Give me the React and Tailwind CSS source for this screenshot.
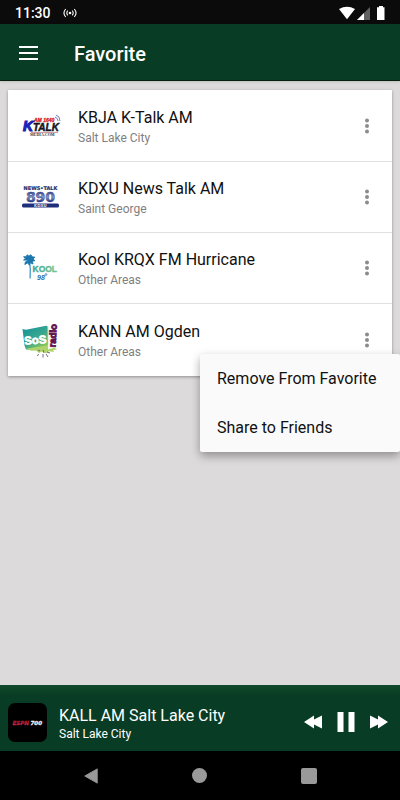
import React, { useState } from 'react';

function KTalkLogo() {
  return (
    <svg viewBox="0 0 42 42" className="w-[42px] h-[42px] shrink-0" aria-hidden="true">
      <g fontFamily="Liberation Sans, sans-serif" fontWeight="bold">
        <text x="14" y="16.5" fontSize="5" fontStyle="italic" fill="#d3202c" stroke="#d3202c" strokeWidth="0.3">AM 1640</text>
        <path d="M35 12q3 1 3 4M36 10q4 1 4 6" fill="none" stroke="#5359a8" strokeWidth="0.8" />
        <text x="13" y="26" fontSize="10" fontStyle="italic" fill="#15151c" stroke="#15151c" strokeWidth="0.5">TALK</text>
        <text x="3" y="26" fontSize="14" fontStyle="italic" fill="#1d22b8" stroke="#1d22b8" strokeWidth="1.1">K</text>
        <path d="M11 27.4h27" stroke="#b86065" strokeWidth="0.7" />
        <text x="10" y="31" fontSize="4" fontFamily="Liberation Serif, serif" fill="#333">MEDIA.COM</text>
      </g>
    </svg>
  );
}

function KdxuLogo() {
  return (
    <svg viewBox="0 0 42 42" className="w-[42px] h-[42px] shrink-0" aria-hidden="true">
      <defs>
        <linearGradient id="kdxu" x1="0" y1="0" x2="0" y2="1">
          <stop offset="0.2" stopColor="#3c4b91" />
          <stop offset="0.5" stopColor="#8d98c4" />
          <stop offset="0.8" stopColor="#25347d" />
        </linearGradient>
      </defs>
      <g fontFamily="DejaVu Sans, sans-serif" fontWeight="bold" textAnchor="middle">
        <text x="20.5" y="14" fontSize="5" fill="#26336f" stroke="#26336f" strokeWidth="0.2">NEWS•TALK</text>
        <text x="20.5" y="26" fontSize="14" fill="url(#kdxu)" stroke="#3c4b91" strokeWidth="0.5">890</text>
        <rect x="2" y="27.5" width="37" height="4" rx="1.5" fill="#1f2f79" />
        <text x="20.5" y="31" fontSize="4" fill="#dfe3f5">KDXU</text>
      </g>
    </svg>
  );
}

function KoolLogo() {
  return (
    <svg viewBox="0 0 42 42" className="w-[42px] h-[42px] shrink-0" aria-hidden="true">
      <path d="M9.5 14q1.4 8 .6 17.5" fill="none" stroke="#4d9fcf" strokeWidth="1.4" />
      <path d="M9 13l-5.4 0 2-1.8-2-1.4 3 0 .4-2 2 1.4 2-1.4.8 2 3 .4-1.8 1.6 1.8 2-2.6.2.8 3-2.8-1.4-.8 2.6-1.6-2.4-3 1.6.8-2.6z" fill="#1c77ae" stroke="#1c77ae" strokeWidth="1" />
      <g fontFamily="Liberation Sans, sans-serif" fontWeight="bold">
        <defs>
          <linearGradient id="kool">
            <stop offset="0" stopColor="#35a79c" />
            <stop offset="1" stopColor="#7cc48a" />
          </linearGradient>
        </defs>
        <text x="12.5" y="25" fontSize="8.5" fill="url(#kool)" stroke="url(#kool)" strokeWidth="0.4">KOOL</text>
        <text x="17" y="33" fontSize="7" fontStyle="italic" fill="#2a6ba8">98</text>
        <circle cx="26" cy="27.5" r="0.9" fill="none" stroke="#2a6ba8" strokeWidth="0.7" />
      </g>
    </svg>
  );
}

function SosLogo() {
  return (
    <svg viewBox="0 0 42 42" className="w-[42px] h-[42px] shrink-0" aria-hidden="true">
      <defs>
        <linearGradient id="sos" x1="0" y1="0" x2="0.8" y2="1">
          <stop offset="0" stopColor="#14909c" />
          <stop offset="0.55" stopColor="#39a88d" />
          <stop offset="1" stopColor="#a2cf4b" />
        </linearGradient>
      </defs>
      <path d="M2.5 10l3.5.8 20-4 3 1 2 21-13 2.4-12-.8-1.5-4z" fill="url(#sos)" />
      <path d="M7 29.5l10-1.5 14-2 6 4.5-4 .5 1 2-5-.8-3 2-4-1.6-3 1.4-3-2.4-5 .2z" fill="#add36a" />
      <path d="M18 31l2 1m3-1l1 3m2 1l2 3m-5-3v3.5m-4-3l-2 1m10-3.5l3 1" stroke="#655879" strokeWidth="0.9" />
      <g fontFamily="Liberation Sans, sans-serif" fontWeight="bold">
        <text x="4" y="25" fontSize="11.5" fill="#fff" stroke="#fff" strokeWidth="0.7" transform="rotate(-4 15 20)">SoS</text>
        <path d="M27.5 6l9.5-1.5-1.5 24-7.5 2z" fill="#fff" fillOpacity="0.85" />
        <text x="0" y="0" fontSize="9.5" fill="#65164f" stroke="#65164f" strokeWidth="0.9" transform="translate(35.5 28.5) rotate(-87)">radio</text>
      </g>
    </svg>
  );
}

const stations = [
  { id: 1, name: 'KBJA K-Talk AM', area: 'Salt Lake City', Logo: KTalkLogo },
  { id: 2, name: 'KDXU News Talk AM', area: 'Saint George', Logo: KdxuLogo },
  { id: 3, name: 'Kool KRQX FM Hurricane', area: 'Other Areas', Logo: KoolLogo },
  { id: 4, name: 'KANN AM Ogden', area: 'Other Areas', Logo: SosLogo },
];

function StatusBar() {
  return (
    <div className="h-6 px-[15px] pt-px flex items-center justify-between bg-[#0b0b0b] text-white">
      <div className="flex items-center gap-3">
        <span className="text-sm font-medium">11:30</span>
        <svg viewBox="0 0 14 10" className="w-3.5 h-2.5" fill="none" stroke="currentColor" strokeWidth="1.1">
          <circle cx="7" cy="5" r="1.3" fill="currentColor" stroke="none" />
          <path d="M4.8 2.7a3.2 3.2 0 0 0 0 4.6M9.2 2.7a3.2 3.2 0 0 1 0 4.6M2.7 1Q-.8 5 2.7 9M11.3 1q3.5 4 0 8" />
        </svg>
      </div>
      <svg viewBox="0 0 46 14" className="w-[46px] h-3.5" fill="currentColor">
        <path d="M0 3Q8 -1.5 16 3L8 13.2z" />
        <path d="M31 1v13H18z" fillOpacity="0.35" />
        <path d="M25 7v7h-7z" />
        <path d="M40 0h4v1.2h1.5V14h-7.5V1.2h2z" />
      </svg>
    </div>
  );
}

export default function App() {
  const [openMenu, setOpenMenu] = useState(4);
  const [favorites, setFavorites] = useState(stations);
  const [playing, setPlaying] = useState(true);

  const handleRemove = (id) => {
    setFavorites(favorites.filter((station) => station.id !== id));
    setOpenMenu(null);
  };

  return (
    <div className="min-h-screen flex flex-col bg-[#dddadc] font-[Roboto,sans-serif]">
      <StatusBar />

      <header className="h-[57px] px-[19px] pt-[3px] flex items-center gap-9 bg-[#093c24] text-white border-b border-[#06200f] shadow-sm">
        <button type="button" aria-label="Open menu" className="w-[19px] flex flex-col gap-1 pb-0.5">
          <span className="h-0.5 w-full bg-white" />
          <span className="h-0.5 w-full bg-white" />
          <span className="h-0.5 w-full bg-white" />
        </button>
        <h1 className="text-xl font-medium">Favorite</h1>
      </header>

      <main className="flex-1 px-2 pt-[9px]">
        <ul className="py-px bg-white divide-y divide-[#e0e0e0] shadow-[0_1px_3px_rgba(0,0,0,0.35)]">
          {favorites.map(({ id, name, area, Logo }) => (
            <li key={id} className="relative flex items-center gap-4 min-h-[71px] px-3">
              <Logo />
              <div className="flex-1 min-w-0 pt-0.5">
                <h2 className="text-base leading-5 text-[#111] truncate">{name}</h2>
                <p className="mt-0.5 text-xs leading-4 text-[#808080]">{area}</p>
              </div>
              <button
                type="button"
                aria-label={`Options for ${name}`}
                onClick={() => setOpenMenu(openMenu === id ? null : id)}
                className="w-[26px] h-10 flex items-center justify-center"
              >
                <svg viewBox="0 0 4 16" className="w-1 h-4" fill="#8c8c8c">
                  <circle cx="2" cy="2.4" r="2" />
                  <circle cx="2" cy="8" r="2" />
                  <circle cx="2" cy="13.6" r="2" />
                </svg>
              </button>
              {openMenu === id && (
                <div className="absolute z-10 top-[50px] -right-2 w-[200px] bg-[#fafafa] rounded-xs shadow-[0_4px_10px_rgba(0,0,0,0.35)]">
                  <button type="button" onClick={() => handleRemove(id)} className="block w-full h-[49px] px-[17px] text-left text-base text-[#111] whitespace-nowrap">
                    Remove From Favorite
                  </button>
                  <button type="button" onClick={() => setOpenMenu(null)} className="block w-full h-[49px] px-[17px] text-left text-base text-[#111] whitespace-nowrap">
                    Share to Friends
                  </button>
                </div>
              )}
            </li>
          ))}
        </ul>
      </main>

      <section className="h-[66px] pl-2 pr-3 pt-2 flex items-center gap-3 bg-linear-to-b from-[#124a2c] to-[#093c24] to-15% text-white">
        <svg viewBox="0 0 39 39" className="w-[39px] h-[39px] shrink-0" aria-hidden="true">
          <rect width="39" height="39" rx="7" fill="#000" />
          <g fontFamily="DejaVu Sans, sans-serif" fontWeight="bold" fontStyle="italic" fontSize="5.5">
            <text x="4.5" y="21.5" fill="#d0203a" stroke="#d0203a" strokeWidth="0.3">ESPN</text>
            <text x="22.5" y="21.5" fill="#f2f2f2" stroke="#f2f2f2" strokeWidth="0.3">700</text>
            <path d="M5 19h16" stroke="#000" strokeWidth="0.4" />
          </g>
        </svg>
        <div className="flex-1 min-w-0 pt-1">
          <p className="text-base leading-5 truncate">KALL AM Salt Lake City</p>
          <p className="text-xs leading-4">Salt Lake City</p>
        </div>
        <div className="flex items-center gap-[15px]">
          <button type="button" aria-label="Previous">
            <svg viewBox="0 0 18 14" className="w-[18px] h-3.5" fill="currentColor">
              <path d="M0 7l10-6.5v4L18 .5v13l-8-4v4z" />
            </svg>
          </button>
          <button type="button" aria-label={playing ? 'Pause' : 'Play'} onClick={() => setPlaying(!playing)}>
            <svg viewBox="0 0 18 20" className="w-[18px] h-5" fill="currentColor">
              {playing ? <path d="M.5 0h6v20h-6zM11.5 0h6v20h-6z" /> : <path d="M1 0l17 10L1 20z" />}
            </svg>
          </button>
          <button type="button" aria-label="Next">
            <svg viewBox="0 0 18 14" className="w-[18px] h-3.5" fill="currentColor">
              <path d="M18 7L8 .5v4L0 .5v13l8-4v4z" />
            </svg>
          </button>
        </div>
      </section>

      <nav className="h-[49px] px-9 flex items-center justify-around bg-black text-[#999]">
        <button type="button" aria-label="Back">
          <svg viewBox="0 0 16 18" className="w-4 h-4" fill="currentColor">
            <path d="M15 1v16L1 9z" stroke="currentColor" strokeLinejoin="round" />
          </svg>
        </button>
        <button type="button" aria-label="Home">
          <span className="block w-[15px] h-[15px] rounded-full bg-[#999]" />
        </button>
        <button type="button" aria-label="Recent apps">
          <span className="block w-4 h-4 rounded-xs bg-[#999]" />
        </button>
      </nav>
    </div>
  );
}
